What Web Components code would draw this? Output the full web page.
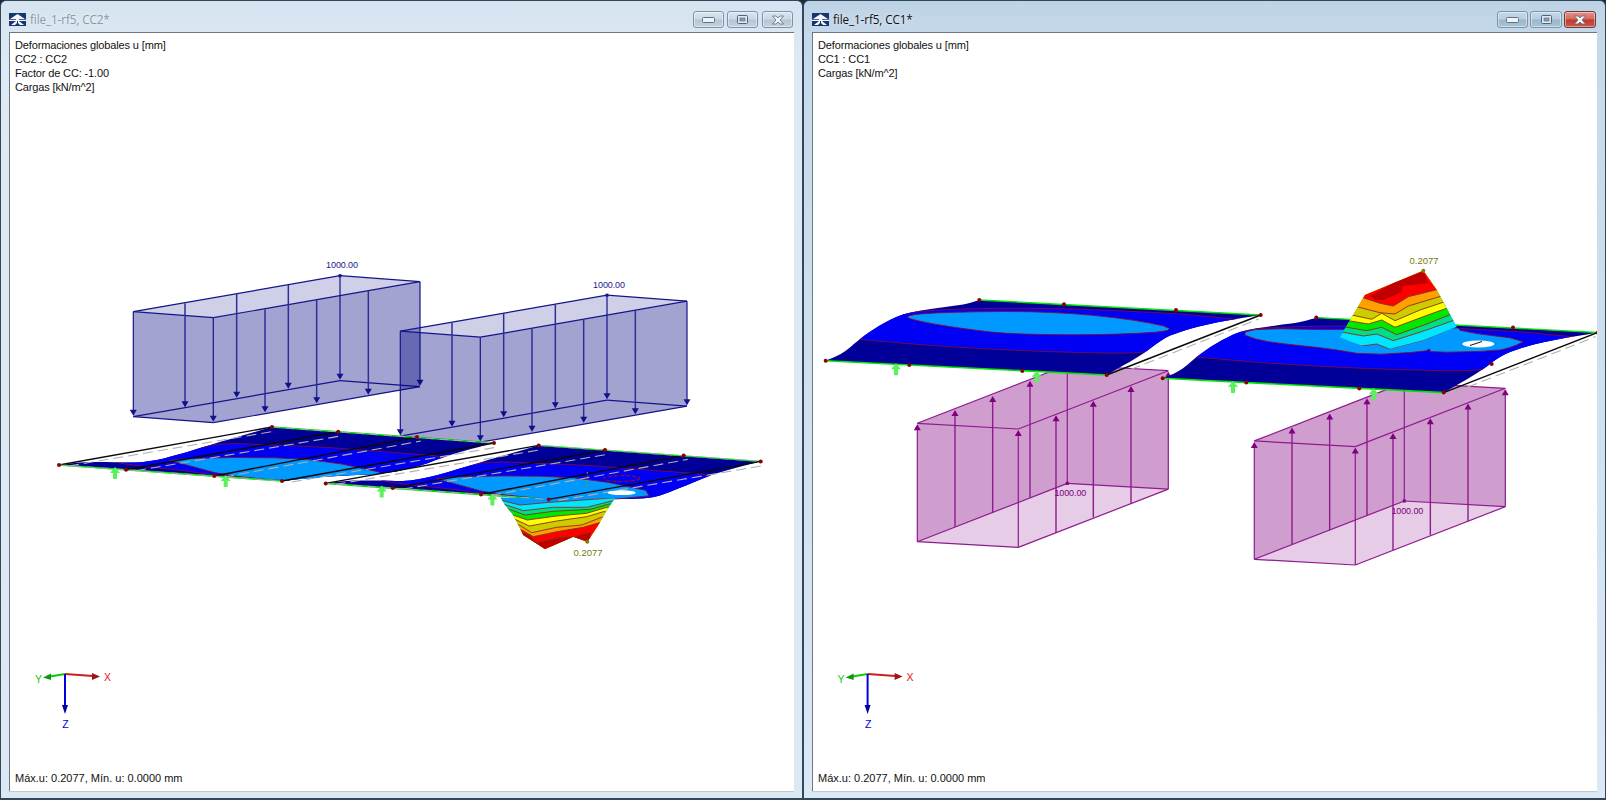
<!DOCTYPE html>
<html lang="es">
<head>
<meta charset="utf-8">
<title>file_1-rf5</title>
<style>
  html, body { margin: 0; padding: 0; background: #1c2a38; }
  body { display: flex; width: 1606px; height: 800px; overflow: hidden; }
</style>
</head>
<body>
<aero-window label="file_1-rf5, CC2*">
  <model-view scene="cc2">
    <span slot="info">Deformaciones globales u [mm]</span>
    <span slot="info">CC2 : CC2</span>
    <span slot="info">Factor de CC: -1.00</span>
    <span slot="info">Cargas [kN/m^2]</span>
    <span slot="status">Máx.u: 0.2077, Mín. u: 0.0000 mm</span>
  </model-view>
</aero-window>
<aero-window label="file_1-rf5, CC1*" active>
  <model-view scene="cc1">
    <span slot="info">Deformaciones globales u [mm]</span>
    <span slot="info">CC1 : CC1</span>
    <span slot="info">Cargas [kN/m^2]</span>
    <span slot="status">Máx.u: 0.2077, Mín. u: 0.0000 mm</span>
  </model-view>
</aero-window>

<script>
// helpers: coordinates were read off zoomed crops, c() maps crop px back to page px
const pts = a => a.map(p => p[0].toFixed(1) + ',' + p[1].toFixed(1)).join(' ');
const c = (ox, oy, a) => a.map(p => [ox + p[0] / 3, oy + p[1] / 3]);
const NAVY = '#000099', BLUE = '#0000f5', LIGHT = '#0099ff', CONTOUR = '#7d0a3c', BAND = '#85301c';
let clipId = 0;

// corner cutting, so the hand-read outlines come out as curves
function ch(a, closed, rounds) {
    let cur = a;
    for (let r = 0; r < (rounds || 2); r++) {
        const out = closed ? [] : [cur[0]];
        const n = closed ? cur.length : cur.length - 1;
        for (let i = 0; i < n; i++) {
            const p = cur[i], q = cur[(i + 1) % cur.length];
            out.push([p[0] * .75 + q[0] * .25, p[1] * .75 + q[1] * .25], [p[0] * .25 + q[0] * .75, p[1] * .25 + q[1] * .75]);
        }
        if (!closed) out.push(cur[cur.length - 1]);
        cur = out;
    }
    return cur;
}

function line(a, b, stroke, w, extra) {
    return `<line x1="${a[0]}" y1="${a[1]}" x2="${b[0]}" y2="${b[1]}" stroke="${stroke}" stroke-width="${w}" ${extra || ''}/>`;
}
function poly(a, fill, extra) {
    return `<polygon points="${pts(a)}" fill="${fill}" ${extra || ''}/>`;
}
function node(p, col) {
    return `<circle cx="${p[0]}" cy="${p[1]}" r="2" fill="${col || '#8b0000'}"/>`;
}
function support(p) {
    const [x, y] = p;
    return poly([[x, y - 6], [x + 5, y], [x + 2, y], [x + 2, y + 6], [x - 2, y + 6], [x - 2, y], [x - 5, y]], '#5cf05c');
}

// dir follows from the two points: head is drawn at b
function arrow(a, b, col, w, head) {
    const dir = b[1] > a[1] ? 1 : -1;
    const tip = b[1];
    return line(a, [b[0], tip - dir * 4], col, w || 1.2) +
        poly([[b[0], tip], [b[0] - 3.5, tip - dir * 6], [b[0] + 3.5, tip - dir * 6]], head || col);
}

function loadDown(dx, dy, label) {
    const col = '#14148a';
    const A = [133.3, 311.7], B = [213.3, 317.7], C = [420, 281.7], D = [340, 275.7];
    const h = 105;
    const low = p => [p[0], p[1] + h];
    let s = `<g transform="translate(${dx} ${dy})">`;
    s += poly([A, B, C, D], '#000080', 'fill-opacity=".19"');
    s += poly([A, B, low(B), low(A)], '#000080', 'fill-opacity=".36"');
    s += poly([B, C, low(C), low(B)], '#000080', 'fill-opacity=".36"');
    [[A, B], [B, C], [C, D], [D, A], [low(A), low(B)], [low(B), low(C)], [low(C), low(D)], [low(D), low(A)]].forEach(e => {
        s += line(e[0], e[1], col, 1.2);
    });
    [[195, 160, 472], [350, 130, 443], [505, 105, 416], [745, 122, 434], [590, 150, 460], [435, 178, 487]].forEach(r => {
        s += arrow([120 + r[0] / 3, 250 + r[1] / 3], [120 + r[0] / 3, 250 + r[2] / 3], '#2e2e98', 1.5, '#10108a');
    });
    [A, B, C, D].forEach(p => { s += arrow(p, [p[0], p[1] + h - 1], col); });
    s += `<rect x="${D[0] - 1.5}" y="${D[1] - 1.5}" width="3" height="3" fill="${col}"/>`;
    s += `<text x="${D[0] + 2}" y="${D[1] - 7.5}" text-anchor="middle" fill="#1a1a8c" class="tiny">${label}</text>`;
    return s + '</g>';
}

function loadUp(dx, dy, label) {
    const col = '#8e1a8e';
    const A = [917.3, 423.3], B = [1018.3, 429], C = [1168.3, 370.7], D = [1067.3, 365];
    const h = 118.4;
    const low = p => [p[0], p[1] + h];
    let s = `<g transform="translate(${dx} ${dy})">`;
    s += poly([A, D, low(D), low(A)], '#800080', 'fill-opacity=".38"');
    s += poly([D, C, low(C), low(D)], '#800080', 'fill-opacity=".38"');
    s += poly([low(A), low(D), low(C), low(B)], '#800080', 'fill-opacity=".2"');
    [[A, B], [B, C], [C, D], [D, A], [low(A), low(B)], [low(B), low(C)], [low(C), low(D)], [low(D), low(A)]].forEach(e => {
        s += line(e[0], e[1], col, 1.2);
    });
    [[165, 500, 150], [278, 458, 108], [390, 413, 62], [468, 518, 166], [580, 472, 122], [693, 430, 78]].forEach(r => {
        s += arrow([900 + r[0] / 3, 360 + r[1] / 3], [900 + r[0] / 3, 360 + r[2] / 3], '#8e1a8e', 1.4, '#800080');
    });
    [A, B, C, D].forEach(p => { s += arrow(low(p), [p[0], p[1] + 1], col, 1.2, '#800080'); });
    s += `<rect x="${D[0] - 1.5}" y="${D[1] + h - 1.5}" width="3" height="3" fill="#800080"/>`;
    s += `<text x="${D[0] + 3}" y="${D[1] + h + 13}" text-anchor="middle" fill="#800080" class="tiny">${label}</text>`;
    return s + '</g>';
}

// contour bumps: each band is everything beyond a zigzag line, clipped to the outline
function bump(outline, bands, dir) {
    const id = 'clip' + (++clipId);
    let s = `<clipPath id="${id}"><polygon points="${pts(outline)}"/></clipPath><g clip-path="url(#${id})">`;
    s += poly(outline, LIGHT);
    bands.forEach(b => {
        const l = b[1];
        const e = l[l.length - 1];
        const close = [[e[0] + 40, e[1]], [e[0] + 40, l[0][1] + dir * 200], [l[0][0] - 40, l[0][1] + dir * 200], [l[0][0] - 40, l[0][1]]];
        s += poly(l.concat(close), b[0], `stroke="${BAND}" stroke-width=".9"`);
    });
    return s + '</g>';
}

const downBump = () => {
    const m = a => c(320, 420, a);
    return bump(m([[540, 232], [555, 255], [580, 285], [610, 345], [675, 387], [760, 350], [802, 365], [835, 315], [860, 270], [885, 235]]), [
        ['#00e6ff', m([[530, 238], [600, 255], [690, 247], [790, 240], [890, 233]])],
        ['#00dd88', m([[550, 252], [610, 272], [700, 262], [800, 262], [875, 243]])],
        ['#00e800', m([[560, 265], [615, 285], [700, 274], [810, 268], [868, 252]])],
        ['#ffff00', m([[570, 282], [622, 300], [710, 288], [800, 280], [860, 262]])],
        ['#cccc00', m([[585, 298], [628, 318], [710, 303], [800, 290], [850, 275]])],
        ['#ffa000', m([[598, 315], [635, 338], [710, 322], [785, 315], [845, 292]])],
        ['#ff0000', m([[605, 330], [640, 350], [710, 335], [790, 322], [838, 308]])],
        ['#c00000', m([[600, 335], [628, 345], [650, 368], [720, 352], [765, 350], [790, 342], [810, 337], [812, 380]])]
    ], 1) + node([587.3, 541.7], '#808000') +
        `<text x="588" y="556" text-anchor="middle" fill="#7a7a10" class="tiny big">0.2077</text>`;
};

const upBump = () => {
    const m = a => c(1160, 250, a);
    return bump(m([[790, 62], [615, 135], [540, 262], [605, 288], [690, 298], [790, 272], [890, 230], [830, 120]]), [
        ['#00e6ff', m([[530, 266], [605, 288], [650, 282], [690, 298], [790, 272], [900, 228]])],
        ['#00dd88', m([[540, 245], [610, 258], [650, 252], [700, 272], [800, 240], [890, 208]])],
        ['#00e800', m([[550, 230], [620, 242], [665, 232], [710, 254], [800, 222], [880, 190]])],
        ['#ffff00', m([[565, 212], [625, 222], [665, 210], [705, 232], [790, 200], [868, 172]])],
        ['#cccc00', m([[575, 195], [635, 208], [665, 190], [705, 212], [780, 180], [855, 155]])],
        ['#ffa000', m([[590, 170], [660, 188], [705, 192], [745, 168], [845, 138]])],
        ['#ff0000', m([[600, 140], [660, 160], [700, 168], [745, 140], [835, 118]])]
    ], -1) + poly(m([[630, 137], [700, 100], [790, 64], [806, 100], [728, 108], [725, 126], [670, 150], [648, 150]]), '#c00000') +
        node([1423.3, 270.7], '#808000') +
        `<text x="1424" y="264" text-anchor="middle" fill="#7a7a10" class="tiny big">0.2077</text>`;
};

// a deformed slab; the same shape is used twice per window, shifted
function slab(d, dx, dy, extra) {
    extra = extra || {};
    const id = 'slab' + (++clipId);
    let s = `<g transform="translate(${dx} ${dy})">`;
    s += `<clipPath id="${id}"><polygon points="${pts(d.outline)}"/></clipPath>`;
    s += poly(d.outline, NAVY);
    s += `<g clip-path="url(#${id})">`;
    s += poly(d.blue, BLUE, `stroke="${CONTOUR}" stroke-width=".9"`);
    s += poly(extra.light || d.light, LIGHT, `stroke="${CONTOUR}" stroke-width=".9"`);
    s += '</g>';
    s += line(d.L, d.B, '#00e600', 1.6) + line(d.T, d.R, '#00e600', 1.4);
    if (extra.surface) s += extra.surface;
    const front = [d.L, d.f1, d.f2, d.B], back = [d.T, d.b1, d.b2, d.R];
    if (d.lines) {
        front.forEach((f, i) => {
            s += line(f, back[i], '#0a0a0a', 1.4);
            s += line([f[0] + 10, f[1] + 1], [back[i][0] + 4, back[i][1] + 4], '#b0b0b0', 1.1, 'stroke-dasharray="10 5"');
        });
        s += line(d.L, d.B, '#a8a8a8', 1.1, 'stroke-dasharray="8 6"') + line(d.T, d.R, '#a8a8a8', 1.1, 'stroke-dasharray="8 6"');
    } else {
        s += line(d.B, d.R, '#0a0a0a', 1.4);
        s += line([d.B[0] + 10, d.B[1] + 0], [d.R[0] - 2, d.R[1] + 4], '#b0b0b0', 1.1, 'stroke-dasharray="10 5"');
    }
    front.concat(back).forEach(p => { s += node(p); });
    d.supports.forEach(p => { s += support(p); });
    if (extra.over) s += extra.over;
    return s + '</g>';
}

const slabBelow = {
    lines: true,
    L: [59, 465], T: [272, 427], R: [494, 443], B: [282, 481],
    f1: [126, 469.7], f2: [214.3, 476], b1: [338.3, 431.7], b2: [417, 437],
    outline: [[59, 465]].concat(
        ch([[282, 481], [340, 481], [385, 480], [405, 473], [443, 457], [467, 450], [494, 443]]),
        ch([[272, 427], [223, 441], [197, 449], [167, 458], [140, 463], [110, 462], [83, 462], [59, 465]])),
    blue: ch([[110, 461], [140, 462], [167, 457], [197, 448], [223, 443], [273, 445], [323, 447], [373, 451], [455, 457], [445, 472], [387, 482], [330, 482], [282, 481], [214, 475], [180, 470], [130, 465]], true, 1),
    light: ch([[163, 459], [257, 457], [323, 460], [398, 476], [335, 482], [282, 481], [223, 475], [187, 465]], true, 1),
    supports: [[115, 473], [225.7, 481]]
};

// the far slab shows a slimmer right end, which leaves the white band before the near one
const slabBelowFar = Object.assign({}, slabBelow, {
    outline: [[59, 465]].concat(
        ch([[282, 481], [330, 476], [384, 474], [417, 467], [447, 456], [467, 450], [494, 443]]),
        ch([[272, 427], [223, 441], [197, 449], [167, 458], [140, 463], [110, 462], [83, 462], [59, 465]]))
});

const slabAbove = {
    lines: false,
    L: [825.7, 360.7], T: [979.3, 300], R: [1260.7, 315], B: [1106.7, 375],
    f1: [909.3, 365], f2: [1022.3, 371], b1: [1064, 304.3], b2: [1176, 310],
    outline: c(810, 280, [[47, 242]].concat(
        ch([[890, 285], [1000, 222], [1060, 175], [1110, 155], [1200, 130], [1353, 105]]),
        ch([[508, 60], [470, 72], [400, 82], [285, 98], [215, 132], [155, 172], [100, 220], [47, 242]]))),
    blue: c(810, 280, ch([[145, 178], [215, 126], [285, 96], [470, 85], [760, 85], [1100, 100], [1280, 118]]).concat(
        ch([[1280, 140], [1110, 165], [1040, 200], [1000, 222], [700, 215], [400, 200], [145, 178]]))),
    light: c(810, 280, ch([[275, 108], [380, 97], [700, 93], [950, 115], [1125, 151], [900, 165], [600, 163], [450, 145], [330, 125]], true, 2)),
    supports: [[896, 369.3], [1036.7, 376.7]]
};

function axes(dx) {
    return `<g transform="translate(${dx} 0)">
        ${line([65, 674], [93, 676], '#c81e1e', 2)}${poly([[100, 676.5], [92, 673], [92, 680]], '#a01414')}
        ${line([65, 674], [50, 676.5], '#10c810', 2)}${poly([[43, 677.5], [51, 673.5], [51, 680]], '#0c9a0c')}
        ${line([65, 674], [65, 706], '#0000e0', 2)}${poly([[65, 714], [62, 705], [68, 705]], '#0000a0')}
        <text x="107.5" y="681" text-anchor="middle" fill="#e01818" class="axis">X</text>
        <text x="38.5" y="683" text-anchor="middle" fill="#10c810" class="axis">Y</text>
        <text x="65.5" y="728" text-anchor="middle" fill="#0000e0" class="axis">Z</text>
    </g>`;
}

const scenes = {
    // left window, seen from underneath
    cc2: {
        box: '10 33 784 758',
        draw() {
            return loadDown(0, 0, '1000.00') + loadDown(267, 19.5, '1000.00') +
                slab(slabBelowFar, 0, 0) +
                slab(slabBelow, 266.7, 18.4, {
                    surface: `<g transform="translate(-266.7 -18.4)">${downBump()}</g>`,
                    over: `<g transform="translate(-266.7 -18.4)">
                        <ellipse cx="621.7" cy="492.7" rx="14" ry="2.4" fill="#fff"/>
                        <ellipse cx="621.7" cy="478.5" rx="18" ry="3" fill="none" stroke="#8b1020" stroke-width="1.2" stroke-dasharray="4 2"/>
                        ${line([587.3, 472], [587.3, 487], '#a09000', 1, 'stroke-dasharray="2 2"')}
                    </g>`
                }) + axes(0);
        }
    },
    // right window, seen from above
    cc1: {
        box: '813 33 784 758',
        draw() {
            return loadUp(0, 0, '1000.00') + loadUp(337, 17.6, '1000.00') +
                slab(slabAbove, 0, 0) +
                slab(slabAbove, 337, 17.6, {
                    light: c(1160 - 337, 250 - 17.6, ch([[240, 250], [300, 235], [545, 240], [890, 230], [905, 245], [1100, 270], [1060, 290], [1010, 303], [810, 308], [810, 295], [795, 305], [620, 315], [500, 295], [400, 285], [300, 272]], true, 1)),
                    over: `<g transform="translate(-337 -17.6)">${upBump()}
                        <ellipse cx="1478.3" cy="344" rx="16" ry="3.4" fill="#fff"/>
                        ${line([1470, 345.5], [1482, 341.5], '#111', 1)}${node([1491.7, 364])}</g>`
                }) + axes(802.6);
        }
    }
};

class WinControls extends HTMLElement {
    constructor() {
        super();
        this.attachShadow({ mode: 'open' });
        this.shadowRoot.innerHTML = `
            <style>
                :host { display: flex; gap: 3px; align-self: flex-start; margin: 10px 1px 0 0; }
                :host([active]) { gap: 2px; }
                .b {
                    width: 31px; height: 17px; box-sizing: border-box;
                    display: flex; align-items: center; justify-content: center;
                    border: 1px solid #7f93a6; border-radius: 3px;
                    background: linear-gradient(#d9e5ef 0%, #c9d8e5 48%, #b3c6d6 52%, #c2d3e1 100%);
                    box-shadow: inset 0 0 0 1px rgba(255,255,255,.45);
                }
                .close { margin-left: 1px; }
                :host([active]) .b + .b { width: 32px; }
                :host([active]) .close { margin-left: 0; }
                :host([active]) .b { background: linear-gradient(#c6d9e9 0%, #b5cde0 48%, #99b6cc 52%, #a9c4d9 100%); }
                :host([active]) .close {
                    background: linear-gradient(#e2948a 0%, #d3685c 48%, #bb3b2c 52%, #c9564a 100%);
                    border-color: #6e3a34;
                }
                svg { display: block; }
            </style>
            <div class="b"><svg width="13" height="6" viewBox="0 0 13 6"><rect x=".5" y=".5" width="12" height="5" rx="1" fill="#eef3f7" stroke="#5d7286"/></svg></div>
            <div class="b"><svg width="11" height="9" viewBox="0 0 11 9"><rect x=".5" y=".5" width="10" height="8" rx="1" fill="#dfe8f0" stroke="#4f6478"/><rect x="3" y="3" width="5" height="3" fill="#8aa0b3" stroke="#4f6478" stroke-width=".6"/></svg></div>
            <div class="b close"><svg width="14" height="10" viewBox="0 0 14 10"><path d="M1.5 1 H5 L7 3 L9 1 H12.5 L9 5 L12.5 9 H9 L7 7 L5 9 H1.5 L5 5 Z" fill="#f3f6f9" stroke="#5d6b78" stroke-width=".8"/></svg></div>
        `;
    }
}
customElements.define('win-controls', WinControls);

class AeroWindow extends HTMLElement {
    constructor() {
        super();
        this.attachShadow({ mode: 'open' });
        this.shadowRoot.innerHTML = `
            <style>
                :host {
                    display: grid; grid-template-rows: 31px 1fr;
                    flex: 0 0 803px; width: 803px; height: 800px; box-sizing: border-box;
                    border: 1px solid #33465a; border-bottom-width: 2px; border-radius: 6px 6px 0 0;
                    background: linear-gradient(#d5e3f0 0, #dfe9f3 60px, #dce8f4 100%);
                    padding: 0 8px 7px 8px;
                    color: #8b99a6;
                }
                :host([active]) { background: linear-gradient(#bdd3e6 0, #c6d9ea 40px, #dbe8f5 100%); color: #111; }
                .bar { display: flex; gap: 4px; align-items: flex-start; min-width: 0; }
                svg { display: block; margin-top: 12px; flex: none; }
                .title {
                    font: 11.7px/1 "Open Sans", "Liberation Sans", sans-serif; margin-top: 13px; flex: 1;
                    letter-spacing: -.1px;
                    text-shadow: 0 0 4px rgba(255,255,255,.9);
                }
                .client { min-height: 0; display: grid; border: 1px solid #6b7783; border-width: 1px 0 0 1px; background: #fff; box-shadow: 0 1px 0 #c8c8c4; }
            </style>
            <div class="bar">
                <svg width="17" height="13" viewBox="0 0 17 13">
                    <rect width="17" height="13" fill="#17356f"/>
                    <path d="M8.5 1 L16 6 H10 V6.8 H17 V8 H10 L15 12 H11 L9 10 V8 H8 V10 L6 12 H2 L7 8 H0 V6.8 H7 V6 H1 Z" fill="#f4f6fa"/>
                </svg>
                <span class="title"></span>
                <win-controls></win-controls>
            </div>
            <div class="client"><slot></slot></div>
        `;
    }
    connectedCallback() {
        this.shadowRoot.querySelector('.title').textContent = this.getAttribute('label');
        if (this.hasAttribute('active')) this.shadowRoot.querySelector('win-controls').setAttribute('active', '');
    }
}
customElements.define('aero-window', AeroWindow);

class ModelView extends HTMLElement {
    constructor() {
        super();
        this.attachShadow({ mode: 'open' });
        this.shadowRoot.innerHTML = `
            <style>
                :host {
                    display: grid; grid-template: 1fr / 1fr; min-height: 0; overflow: hidden;
                    font: 11px/14px "Liberation Sans", Arial, sans-serif; color: #111;
                    background: #fff;
                }
                .stack { grid-area: 1 / 1; min-width: 0; min-height: 0; }
                svg { display: block; width: 100%; height: 100%; }
                .tiny { font: 9px "Liberation Sans", Arial, sans-serif; letter-spacing: -.1px; }
                .big { font-size: 9.5px; letter-spacing: 0; }
                .axis { font: 10.5px "Liberation Sans", Arial, sans-serif; }
                .text { display: flex; flex-direction: column; justify-content: space-between; padding: 5px 5px 6px 5px; }
                .info { display: flex; flex-direction: column; letter-spacing: -.14px; }
                ::slotted(span) { display: block; }
            </style>
            <div class="stack"><svg xmlns="http://www.w3.org/2000/svg"></svg></div>
            <div class="stack text">
                <div class="info"><slot name="info"></slot></div>
                <div class="status"><slot name="status"></slot></div>
            </div>
        `;
    }
    connectedCallback() {
        const scene = scenes[this.getAttribute('scene')];
        const svg = this.shadowRoot.querySelector('svg');
        svg.setAttribute('viewBox', scene.box);
        svg.innerHTML = scene.draw();
    }
}
customElements.define('model-view', ModelView);
</script>
</body>
</html>
